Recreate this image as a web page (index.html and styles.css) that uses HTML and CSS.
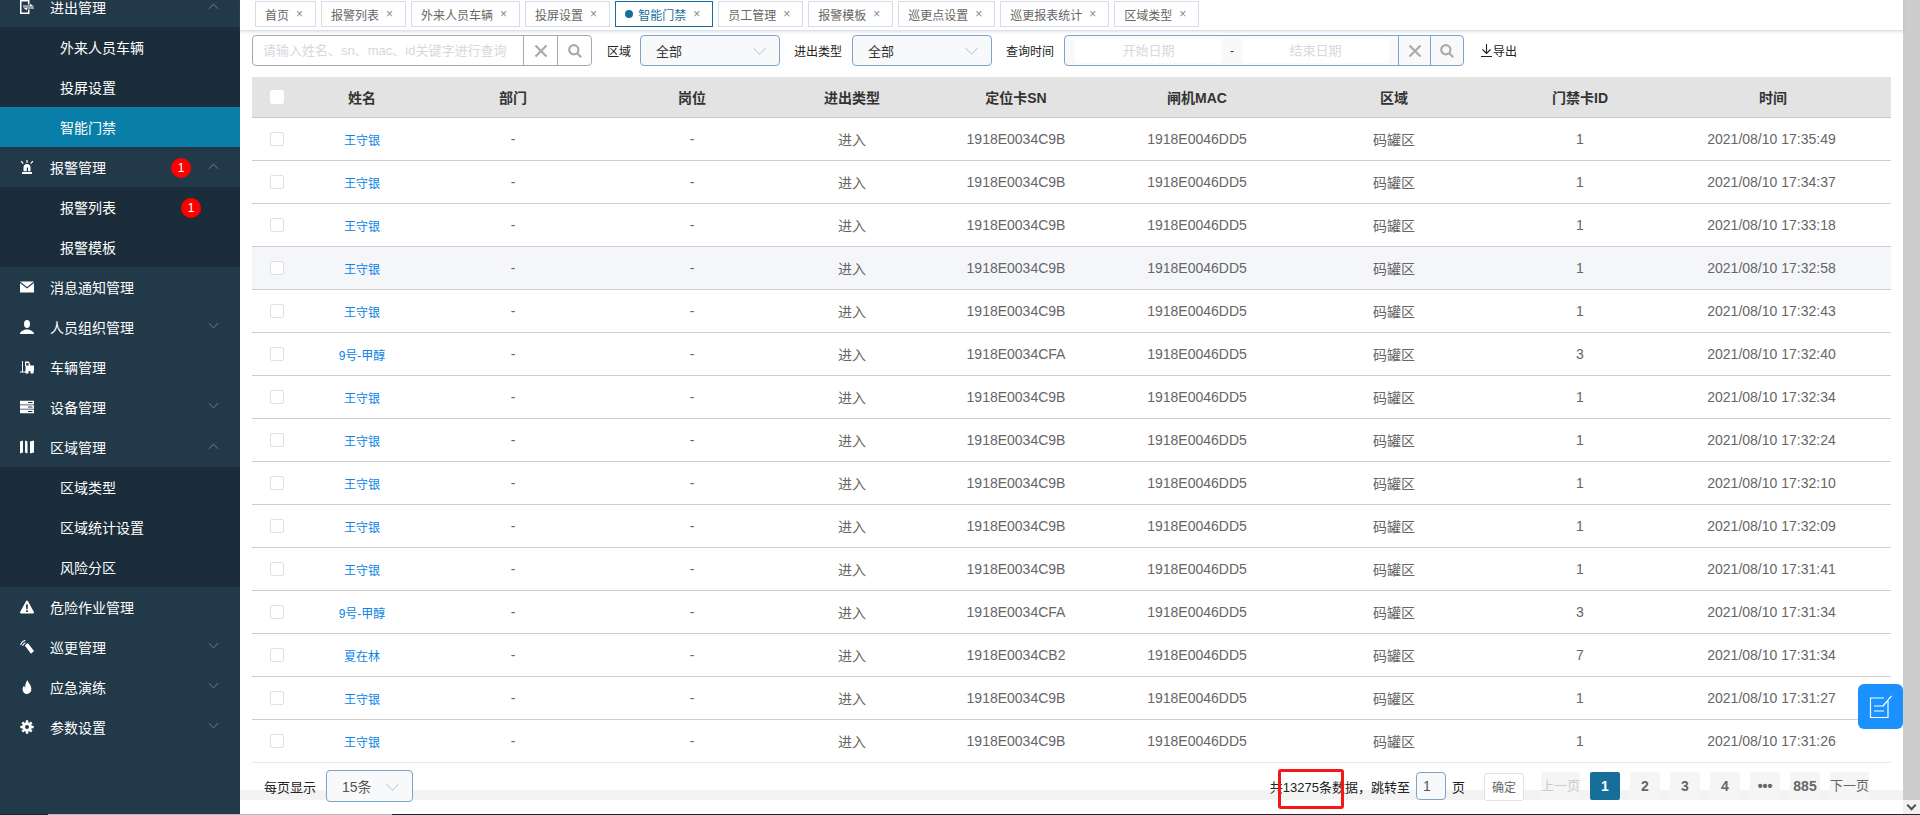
FILE: index.html
```html
<!DOCTYPE html>
<html lang="zh-CN">
<head>
  <meta charset="utf-8">
  <title>智能门禁</title>
  <link rel="stylesheet" href="styles.css">
</head>
<body>
  <div class="app">
    <!-- 左侧菜单 -->
    <div class="sidebar">
      <div class="menu">
        <div class="item"><svg class="ico" viewBox="0 0 14 14"><path d="M0 0h9.5v4.500H8V1.500H1.500v11H8v-3h1.500V14H0z"/><path d="M3 5.600h7V3.800l4 2.600H3zM14 7.600v1H7v1.800L3 7.600z"/></svg><span>进出管理</span><i class="arrow up"></i></div>
        <div class="sub">外来人员车辆</div>
        <div class="sub">投屏设置</div>
        <div class="sub active">智能门禁</div>
        <div class="item"><svg class="ico" viewBox="0 0 14 14"><path d="M2 12h10v2H2zM3.500 11.200V7.500a3.500 3.500 0 0 1 7 0v3.700H8V7.500H6.800v3.700z"/><path d="M6.400 0h1.200v3H6.400zM.6 1.600l.8-.8 2.300 2.300-.8.8zM13.400 1.600l-.8-.8-2.300 2.300.8.8z"/></svg><span>报警管理</span><b class="badge">1</b><i class="arrow up"></i></div>
        <div class="sub">报警列表<b class="badge sub-badge">1</b></div>
        <div class="sub">报警模板</div>
        <div class="item"><svg class="ico" viewBox="0 0 14 14"><path d="M0 1.500h14L7 7zM0 3l7 5.500L14 3v9.500H0z"/></svg><span>消息通知管理</span></div>
        <div class="item"><svg class="ico" viewBox="0 0 14 14"><ellipse cx="7" cy="4" rx="3" ry="4"/><path d="M0 14c0-3 3-3.400 5-4.600h4c2 1.200 5 1.600 5 4.600z"/></svg><span>人员组织管理</span><i class="arrow"></i></div>
        <div class="item"><svg class="ico" viewBox="0 0 14 14"><path d="M2 1h1v10.500h3v1H0v-1h2z"/><path d="M5 1.500h4l1.500 4H14v5.500H5.500V5.500h3.400L8.300 3H6.200V6H5z"/><circle cx="7" cy="12" r="1.800"/><circle cx="12" cy="12" r="1.800"/></svg><span>车辆管理</span></div>
        <div class="item"><svg class="ico" viewBox="0 0 14 14"><path d="M0 .8h14v3.600H0zM0 5.200h14v3.600H0zM0 9.600h14v3.600H0z"/><path class="cut" d="M8 2h4.500v1H8zM8 6.500h4.500v1H8zM8 10.900h4.500v1H8z"/></svg><span>设备管理</span><i class="arrow"></i></div>
        <div class="item"><svg class="ico" viewBox="0 0 14 14"><path d="M0 1.500 3 .5v12l-3 1zM5 .5l2.500 1v12l-2.500-1zM10 1.500 14 .5v12l-4 1z"/></svg><span>区域管理</span><i class="arrow up"></i></div>
        <div class="sub">区域类型</div>
        <div class="sub">区域统计设置</div>
        <div class="sub">风险分区</div>
        <div class="item"><svg class="ico" viewBox="0 0 14 14"><path d="M7 .5a1 1 0 0 1 .9.5l6 11a1 1 0 0 1-.9 1.500H1a1 1 0 0 1-.9-1.500l6-11A1 1 0 0 1 7 .5z"/><path class="cut" d="M6 4.500h2l-.3 4.800H6.300zM6.100 10.200h1.800V12H6.100z"/></svg><span>危险作业管理</span></div>
        <div class="item"><svg class="ico" viewBox="0 0 14 14"><path d="M4.800 5.400 7.800 3l6.200 8-3 2.800z"/><path class="line" d="M.6 5C1.200 2.600 2.800 1 5.400.4M2.600 5.800c.4-1.500 1.300-2.500 2.900-3"/></svg><span>巡更管理</span><i class="arrow"></i></div>
        <div class="item"><svg class="ico" viewBox="0 0 14 14"><path d="M7.500 0c.6 3 3.800 4.700 3.800 8.700A4.500 4.500 0 0 1 7 14a4.500 4.500 0 0 1-4.400-5c0-1.600.8-2.800 1.700-3.600 0 1.100.4 1.900 1 2.200C5.100 5 5.800 2 7.500 0z"/></svg><span>应急演练</span><i class="arrow"></i></div>
        <div class="item"><svg class="ico" viewBox="0 0 14 14"><path class="line thick" d="M7 .3v13.400M.3 7h13.400M2.300 2.300l9.400 9.400M11.700 2.300l-9.400 9.400"/><circle cx="7" cy="7" r="4.800"/><circle class="cut" cx="7" cy="7" r="2"/></svg><span>参数设置</span><i class="arrow"></i></div>
      </div>
    </div>

    <div class="main">
      <div class="tabs">
        <div class="tab">首页<em>×</em></div>
        <div class="tab">报警列表<em>×</em></div>
        <div class="tab">外来人员车辆<em>×</em></div>
        <div class="tab">投屏设置<em>×</em></div>
        <div class="tab current"><u></u>智能门禁<em>×</em></div>
        <div class="tab">员工管理<em>×</em></div>
        <div class="tab">报警模板<em>×</em></div>
        <div class="tab">巡更点设置<em>×</em></div>
        <div class="tab">巡更报表统计<em>×</em></div>
        <div class="tab">区域类型<em>×</em></div>
      </div>

      <div class="filter">
        <div class="search">
          <input class="keyword" type="text" placeholder="请输入姓名、sn、mac、id关键字进行查询">
          <button class="tool wide"><svg viewBox="0 0 14 14"><path d="M1.500 1.500l11 11M12.500 1.500l-11 11"/></svg></button>
          <button class="tool wide"><svg viewBox="0 0 14 14"><circle cx="5.800" cy="5.800" r="4.600"/><path d="M9.200 9.200 13.200 13.200"/></svg></button>
        </div>
        <label class="lab first">区域</label>
        <div class="select"><span>全部</span><i class="arrow light"></i></div>
        <label class="lab">进出类型</label>
        <div class="select"><span>全部</span><i class="arrow light"></i></div>
        <label class="lab">查询时间</label>
        <div class="dates">
          <input class="date" type="text" placeholder="开始日期">
          <span class="dash">-</span>
          <input class="date" type="text" placeholder="结束日期">
          <button class="tool blue"><svg viewBox="0 0 14 14"><path d="M1.500 1.500l11 11M12.500 1.500l-11 11"/></svg></button>
          <button class="tool blue"><svg viewBox="0 0 14 14"><circle cx="5.800" cy="5.800" r="4.600"/><path d="M9.200 9.200 13.200 13.200"/></svg></button>
        </div>
        <div class="export"><svg viewBox="0 0 11 13"><path d="M5.500 0v9M1.500 5.500l4 4 4-4M0 12.500h11"/></svg>导出</div>
      </div>

      <table class="list">
        <thead>
          <tr><th><i class="check head"></i></th><th>姓名</th><th>部门</th><th>岗位</th><th>进出类型</th><th>定位卡SN</th><th>闸机MAC</th><th>区域</th><th>门禁卡ID</th><th>时间</th></tr>
        </thead>
        <tbody>
          <tr><td><i class="check"></i></td><td class="name">王守银</td><td>-</td><td>-</td><td>进入</td><td>1918E0034C9B</td><td>1918E0046DD5</td><td>码罐区</td><td>1</td><td>2021/08/10 17:35:49</td></tr>
          <tr><td><i class="check"></i></td><td class="name">王守银</td><td>-</td><td>-</td><td>进入</td><td>1918E0034C9B</td><td>1918E0046DD5</td><td>码罐区</td><td>1</td><td>2021/08/10 17:34:37</td></tr>
          <tr><td><i class="check"></i></td><td class="name">王守银</td><td>-</td><td>-</td><td>进入</td><td>1918E0034C9B</td><td>1918E0046DD5</td><td>码罐区</td><td>1</td><td>2021/08/10 17:33:18</td></tr>
          <tr class="hover"><td><i class="check"></i></td><td class="name">王守银</td><td>-</td><td>-</td><td>进入</td><td>1918E0034C9B</td><td>1918E0046DD5</td><td>码罐区</td><td>1</td><td>2021/08/10 17:32:58</td></tr>
          <tr><td><i class="check"></i></td><td class="name">王守银</td><td>-</td><td>-</td><td>进入</td><td>1918E0034C9B</td><td>1918E0046DD5</td><td>码罐区</td><td>1</td><td>2021/08/10 17:32:43</td></tr>
          <tr><td><i class="check"></i></td><td class="name">9号-甲醇</td><td>-</td><td>-</td><td>进入</td><td>1918E0034CFA</td><td>1918E0046DD5</td><td>码罐区</td><td>3</td><td>2021/08/10 17:32:40</td></tr>
          <tr><td><i class="check"></i></td><td class="name">王守银</td><td>-</td><td>-</td><td>进入</td><td>1918E0034C9B</td><td>1918E0046DD5</td><td>码罐区</td><td>1</td><td>2021/08/10 17:32:34</td></tr>
          <tr><td><i class="check"></i></td><td class="name">王守银</td><td>-</td><td>-</td><td>进入</td><td>1918E0034C9B</td><td>1918E0046DD5</td><td>码罐区</td><td>1</td><td>2021/08/10 17:32:24</td></tr>
          <tr><td><i class="check"></i></td><td class="name">王守银</td><td>-</td><td>-</td><td>进入</td><td>1918E0034C9B</td><td>1918E0046DD5</td><td>码罐区</td><td>1</td><td>2021/08/10 17:32:10</td></tr>
          <tr><td><i class="check"></i></td><td class="name">王守银</td><td>-</td><td>-</td><td>进入</td><td>1918E0034C9B</td><td>1918E0046DD5</td><td>码罐区</td><td>1</td><td>2021/08/10 17:32:09</td></tr>
          <tr><td><i class="check"></i></td><td class="name">王守银</td><td>-</td><td>-</td><td>进入</td><td>1918E0034C9B</td><td>1918E0046DD5</td><td>码罐区</td><td>1</td><td>2021/08/10 17:31:41</td></tr>
          <tr><td><i class="check"></i></td><td class="name">9号-甲醇</td><td>-</td><td>-</td><td>进入</td><td>1918E0034CFA</td><td>1918E0046DD5</td><td>码罐区</td><td>3</td><td>2021/08/10 17:31:34</td></tr>
          <tr><td><i class="check"></i></td><td class="name">夏在林</td><td>-</td><td>-</td><td>进入</td><td>1918E0034CB2</td><td>1918E0046DD5</td><td>码罐区</td><td>7</td><td>2021/08/10 17:31:34</td></tr>
          <tr><td><i class="check"></i></td><td class="name">王守银</td><td>-</td><td>-</td><td>进入</td><td>1918E0034C9B</td><td>1918E0046DD5</td><td>码罐区</td><td>1</td><td>2021/08/10 17:31:27</td></tr>
          <tr class="last"><td><i class="check"></i></td><td class="name">王守银</td><td>-</td><td>-</td><td>进入</td><td>1918E0034C9B</td><td>1918E0046DD5</td><td>码罐区</td><td>1</td><td>2021/08/10 17:31:26</td></tr>
        </tbody>
      </table>

      <div class="pager">
        <span class="per">每页显示</span>
        <div class="select size"><span>15条</span><i class="arrow light"></i></div>
        <span class="total">共13275条数据，跳转至</span>
        <input class="jump" type="text" value="1">
        <span class="ye">页</span>
        <button class="ok">确定</button>
        <a class="pg text off">上一页</a>
        <a class="pg on">1</a>
        <a class="pg">2</a>
        <a class="pg">3</a>
        <a class="pg">4</a>
        <a class="pg">•••</a>
        <a class="pg">885</a>
        <a class="pg text">下一页</a>
      </div>

      <!-- 红框标注 -->
      <div class="redbox"></div>
      <div class="float-btn"><svg viewBox="0 0 24 24"><path d="M19 6v16.500H1.500V3H15"/><path d="M5 11h10M5 16h10M14 11 22.500 .8"/></svg></div>
    </div>

    <div class="scrollbar"><div class="thumb"></div><i class="arrow dark"></i></div>
  </div>
  <div class="taskline"></div>
</body>
</html>
```

FILE: styles.css
```css
html, body {
  margin: 0;
  height: 815px;
  overflow: hidden;
}
body {
  font-family: "Liberation Sans", "Noto Sans CJK SC", sans-serif;
  font-size: 14px;
  color: #333;
  background: #fff;
}
input, button {
  font-family: inherit;
  outline: none;
}
.app {
  display: flex;
  height: 814px;
}
.taskline {
  height: 1px;
  background: linear-gradient(to right, #1c2533 48px, #bbb 48px, #bbb 392px, #1c2533 392px);
}

/* sidebar */
.sidebar {
  width: 240px;
  flex: none;
  background: #22394a;
  overflow: hidden;
}
.menu {
  margin-top: -13px;
}
.item, .sub {
  display: flex;
  align-items: center;
  height: 40px;
  color: #fff;
  position: relative;
}
.item {
  padding-left: 20px;
}
.sub {
  padding-left: 60px;
  background: #1b2d3a;
}
.sub.active {
  background: #087ea9;
}
.ico {
  width: 14px;
  height: 14px;
  margin-right: 16px;
  fill: #fff;
  flex: none;
}
.ico .cut {
  fill: #22394a;
}
.ico .line {
  fill: none;
  stroke: #fff;
  stroke-width: 1.1;
}
.ico .thick {
  stroke-width: 2.4;
}
.badge {
  position: absolute;
  left: 171px;
  top: 11px;
  width: 20px;
  height: 20px;
  line-height: 20px;
  border-radius: 50%;
  background: #f00;
  color: #fff;
  font-size: 12px;
  font-weight: normal;
  text-align: center;
}
.sub-badge {
  left: 181px;
  top: 11px;
}
.arrow {
  display: block;
  width: 7px;
  height: 7px;
  box-sizing: border-box;
  border-right: 1px solid #5a6b7a;
  border-bottom: 1px solid #5a6b7a;
  transform: rotate(45deg);
}
.item .arrow {
  position: absolute;
  left: 210px;
  top: 13px;
}
.item .arrow.up {
  top: 18px;
  transform: rotate(225deg);
}
.arrow.light {
  width: 9px;
  height: 9px;
  border-color: #c6ccd6;
  margin-top: -4px;
}

/* tabs */
.main {
  flex: 1;
  min-width: 0;
  position: relative;
  display: flex;
  flex-direction: column;
}
.tabs {
  display: flex;
  gap: 5px;
  height: 29px;
  padding: 1px 0 0 15px;
  border-bottom: 1px solid #dde3ea;
  box-shadow: 0 1px 3px rgba(120, 140, 170, .25);
}
.tab {
  display: flex;
  align-items: center;
  height: 26px;
  box-sizing: border-box;
  padding: 0 12px 0 9px;
  border: 1px solid #d8dce8;
  font-size: 12px;
  color: #666;
}
.tab em {
  font-style: normal;
  color: #888;
  margin-left: 7px;
}
.tab.current {
  border-color: #176f99;
  color: #176f99;
}
.tab u {
  width: 8px;
  height: 8px;
  border-radius: 50%;
  background: #176f99;
  margin-right: 5px;
}

/* filter */
.filter {
  display: flex;
  align-items: center;
  height: 31px;
  margin: 4px 12px 11px;
}
.search {
  display: flex;
  width: 340px;
  height: 31px;
  box-sizing: border-box;
  border: 1px solid #a8a8a8;
  border-radius: 4px;
}
.keyword {
  width: 268px;
  border: 0;
  padding: 0 0 0 10px;
  font-size: 13px;
  background: transparent;
}
.keyword::placeholder, .date::placeholder {
  color: #d5d8de;
}
.tool {
  width: 24px;
  border: 0;
  border-left: 1px solid #a8a8a8;
  padding: 0;
  background: transparent;
  display: flex;
  align-items: center;
  justify-content: center;
}
.tool.wide {
  width: 35px;
}
.tool.blue {
  width: 32px;
  border-left-color: #7ba3cc;
}
.tool svg {
  width: 14px;
  height: 14px;
  fill: none;
  stroke: #aaa;
  stroke-width: 2.2;
}
.lab {
  font-size: 12px;
  color: #222;
  margin: 0 10px 0 14px;
}
.lab.first {
  margin-left: 15px;
  margin-right: 9px;
}
.select {
  display: flex;
  align-items: center;
  justify-content: space-between;
  width: 140px;
  height: 31px;
  box-sizing: border-box;
  padding: 0 15px;
  border: 1px solid #7ba3cc;
  border-radius: 4px;
  background: #f8f9fb;
  font-size: 13px;
}
.dates {
  display: flex;
  align-items: center;
  width: 400px;
  height: 31px;
  box-sizing: border-box;
  padding-left: 10px;
  border: 1px solid #7ba3cc;
  border-radius: 4px;
  background: #f8f9fb;
}
.date {
  width: 147px;
  height: 24px;
  box-sizing: border-box;
  border: 0;
  padding: 0;
  background: #fff;
  text-align: center;
  font-size: 13px;
}
.dash {
  width: 20px;
  text-align: center;
  font-size: 12px;
}
.dates .tool {
  height: 29px;
}
.dates .tool:first-of-type {
  margin-left: 9px;
}
.export {
  display: flex;
  align-items: center;
  gap: 1px;
  margin-left: 17px;
  font-size: 12px;
  color: #222;
}
.export svg {
  width: 11px;
  height: 13px;
  fill: none;
  stroke: #222;
  stroke-width: 1.1;
}

/* table */
.list {
  width: 1639px;
  margin-left: 12px;
  table-layout: fixed;
  border-collapse: separate;
  border-spacing: 0;
  flex: none;
}
.list th {
  height: 40px;
  padding: 0;
  background: #e3e3e3;
  border-bottom: 1px solid #c9c9c9;
  font-size: 14px;
  color: #333;
}
.list td {
  height: 42px;
  padding: 0;
  border-bottom: 1px solid #cdcdcd;
  text-align: center;
  color: #666;
}
.list th:nth-child(1) { width: 50px; }
.list th:nth-child(2) { width: 120px; }
.list th:nth-child(3) { width: 182px; }
.list th:nth-child(4) { width: 176px; }
.list th:nth-child(5) { width: 144px; }
.list th:nth-child(6) { width: 184px; }
.list th:nth-child(7) { width: 178px; }
.list th:nth-child(8) { width: 216px; }
.list th:nth-child(9) { width: 156px; }
.list th:last-child {
  padding-right: 3px;
}
.list td:last-child {
  padding-right: 6px;
}
.list .name {
  font-size: 12px;
  color: #0a84e6;
}
.list .hover td {
  background: #f5f6fa;
}
.list .last td {
  border-bottom-color: #e8e8f0;
}
.check {
  display: block;
  width: 14px;
  height: 14px;
  box-sizing: border-box;
  margin: 0 auto;
  border: 1px solid #dcdee8;
  border-radius: 2px;
  background: #fff;
}
.check.head {
  border-color: #fff;
}

/* pager */
.pager {
  display: flex;
  align-items: center;
  height: 46px;
  padding: 0 34px 0 24px;
  font-size: 13px;
  color: #222;
  background: linear-gradient(#f3f3f3, #f3f3f3) no-repeat 0 27px / 100% 10px;
}
.per {
  margin-right: 10px;
}
.select.size {
  width: 87px;
  height: 32px;
  color: #555;
  font-size: 14px;
}
.total {
  margin-left: auto;
}
.jump {
  width: 30px;
  height: 28px;
  box-sizing: border-box;
  margin: 0 6px;
  padding: 0 0 0 6px;
  border: 1px solid #7ba3cc;
  border-radius: 4px;
  background: #f8f9fb;
  font-size: 14px;
  color: #555;
}
.ok {
  width: 40px;
  height: 28px;
  margin: 1px 17px 0 19px;
  padding: 0;
  border: 1px solid #dfe2e8;
  border-radius: 3px;
  background: #fff;
  font-size: 12px;
  color: #666;
}
.pg {
  width: 30px;
  height: 28px;
  line-height: 28px;
  margin-right: 10px;
  background: #f5f5f5;
  border-radius: 2px;
  text-align: center;
  font-size: 14px;
  font-weight: bold;
  color: #666;
}
.pg.text {
  width: 39px;
  font-size: 13px;
  font-weight: normal;
}
.pg.off {
  color: #ccc;
}
.pg.on {
  background: #176f99;
  color: #fff;
}
.pg:last-child {
  margin-right: 0;
}

/* overlays */
.redbox {
  position: absolute;
  left: 1038px;
  top: 769px;
  width: 66px;
  height: 40px;
  box-sizing: border-box;
  border: 3px solid #f51616;
  border-radius: 3px;
}
.float-btn {
  position: absolute;
  right: 0;
  top: 684px;
  width: 45px;
  height: 45px;
  border-radius: 6px;
  background: #1b90ff;
  display: flex;
  align-items: center;
  justify-content: center;
}
.float-btn svg {
  width: 24px;
  height: 24px;
  fill: none;
  stroke: #fff;
  stroke-width: 1.2;
}

.scrollbar {
  width: 17px;
  flex: none;
  background: #f1f1f1;
  display: flex;
  flex-direction: column;
  align-items: center;
}
.thumb {
  width: 100%;
  height: 800px;
  background: #cdcdcd;
  flex: none;
}
.arrow.dark {
  width: 7px;
  height: 7px;
  margin-top: 2px;
  border-right: 2px solid #505050;
  border-bottom: 2px solid #505050;
}
```
